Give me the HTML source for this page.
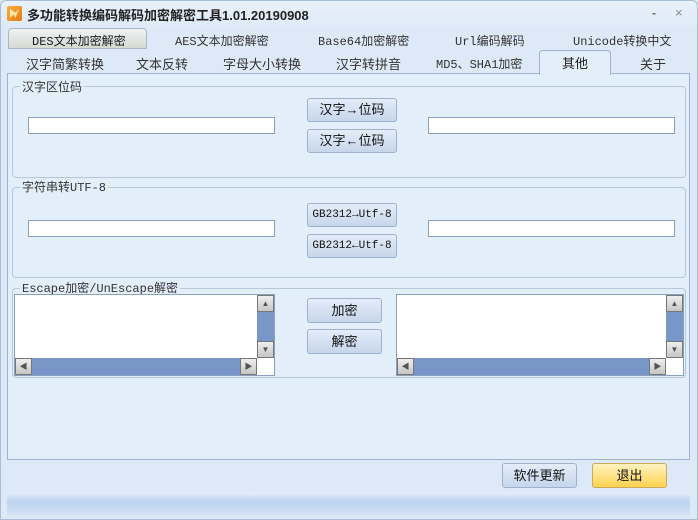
<!DOCTYPE html>
<html><head><meta charset="utf-8"><style>
*{box-sizing:border-box;margin:0;padding:0}
body{width:698px;height:520px;overflow:hidden;background:#dde9f7;font-family:"Liberation Sans","Noto Sans CJK SC",sans-serif;font-size:12px;color:#1a1a1a;position:relative}
.a{position:absolute}
.win{left:0;top:0;width:698px;height:520px;border:1px solid #a9bdd6;border-radius:6px 6px 0 0;background:linear-gradient(#e9f1fb,#dde9f7 30px)}
.t{font-size:12px;white-space:nowrap}
.panel{left:7px;top:73px;width:683px;height:387px;border:1px solid #9fb3cc;background:#e3eefb}
.grp{border:1px solid #b7c8dc;border-radius:4px;background:#e3eefb}
.gl{background:#e3eefb;padding:0 2px;color:#333;font-size:12px}
.in{background:#fff;border:1px solid #8aa1bd}
.btn{border:1px solid #9eb2cc;border-radius:3px;background:linear-gradient(#e4edf8,#c6d6ec);text-align:center;font-size:13px;color:#111}
.mono{font-family:"Liberation Mono","Noto Sans CJK SC",monospace;font-size:11px}
.sb{background:#7897c8}
.sbtn{background:linear-gradient(#eee,#c6c6c6);border:1px solid #777;width:17px;height:17px;font-size:8px;color:#555;text-align:center;line-height:15px}
</style></head><body>
<div class="a win"></div>
<div class="a" style="left:7px;top:6px;width:15px;height:15px;background:linear-gradient(135deg,#f7b23a,#e77814);border-radius:2px"><div class="a" style="left:3px;top:3px;width:9px;height:9px;background:#ffe9a8;clip-path:polygon(0 0,60% 40%,100% 0,60% 100%,40% 60%,0 100%)"></div></div>
<div class="a t" style="left:27px;top:5px;font-weight:bold;font-size:13px;color:#222">多功能转换编码解码加密解密工具1.01.20190908</div>
<div class="a t" style="left:652px;top:6px;color:#666;font-weight:bold">-</div>
<div class="a t" style="left:675px;top:5px;color:#888;font-size:13px">×</div>
<!-- tab row 1 -->
<div class="a" style="left:8px;top:28px;width:139px;height:21px;border:1px solid #a9b8c8;border-radius:4px 4px 0 0;background:linear-gradient(#eef2f6,#d5dbd0)"></div>
<div class="a t mono" style="left:32px;top:32px;font-size:12px">DES文本加密解密</div>
<div class="a t mono" style="left:175px;top:32px;font-size:12px;color:#333">AES文本加密解密</div>
<div class="a t mono" style="left:318px;top:32px;font-size:12px;color:#333">Base64加密解密</div>
<div class="a t mono" style="left:455px;top:32px;font-size:12px;color:#333">Url编码解码</div>
<div class="a t mono" style="left:573px;top:32px;font-size:12px;color:#333">Unicode转换中文</div>
<!-- tab row 2 -->
<div class="a" style="left:539px;top:50px;width:72px;height:25px;border:1px solid #9fb3cc;border-bottom:none;border-radius:4px 4px 0 0;background:#e3eefb;z-index:2"></div>
<div class="a t" style="left:26px;top:54px;font-size:13px;color:#333">汉字简繁转换</div>
<div class="a t" style="left:136px;top:54px;font-size:13px;color:#333">文本反转</div>
<div class="a t" style="left:223px;top:54px;font-size:13px;color:#333">字母大小转换</div>
<div class="a t" style="left:336px;top:54px;font-size:13px;color:#333">汉字转拼音</div>
<div class="a t mono" style="left:436px;top:55px;font-size:12px;color:#333">MD5、SHA1加密</div>
<div class="a t" style="left:562px;top:53px;font-size:13px;z-index:3">其他</div>
<div class="a t" style="left:640px;top:54px;font-size:13px;color:#333">关于</div>
<div class="a panel"></div>
<!-- group 1 -->
<div class="a grp" style="left:12px;top:86px;width:674px;height:92px"></div>
<div class="a t gl" style="left:20px;top:78px;font-size:12px">汉字区位码</div>
<div class="a in" style="left:28px;top:117px;width:247px;height:17px"></div>
<div class="a in" style="left:428px;top:117px;width:247px;height:17px"></div>
<div class="a btn" style="left:307px;top:98px;width:90px;height:24px;line-height:22px">汉字→位码</div>
<div class="a btn" style="left:307px;top:129px;width:90px;height:24px;line-height:22px">汉字←位码</div>
<!-- group 2 -->
<div class="a grp" style="left:12px;top:187px;width:674px;height:91px"></div>
<div class="a t gl mono" style="left:20px;top:178px;font-size:12px">字符串转UTF-8</div>
<div class="a in" style="left:28px;top:220px;width:247px;height:17px"></div>
<div class="a in" style="left:428px;top:220px;width:247px;height:17px"></div>
<div class="a btn mono" style="left:307px;top:203px;width:90px;height:24px;line-height:22px">GB2312→Utf-8</div>
<div class="a btn mono" style="left:307px;top:234px;width:90px;height:24px;line-height:22px">GB2312←Utf-8</div>
<!-- group 3 -->
<div class="a grp" style="left:12px;top:288px;width:674px;height:90px"></div>
<div class="a t gl mono" style="left:20px;top:279px;font-size:12px">Escape加密/UnEscape解密</div>
<div class="a in" style="left:14px;top:294px;width:261px;height:82px"></div>
<div class="a sb" style="left:257px;top:295px;width:17px;height:63px"></div>
<div class="a sbtn" style="left:257px;top:295px">▲</div>
<div class="a sbtn" style="left:257px;top:341px">▼</div>
<div class="a sb" style="left:15px;top:358px;width:242px;height:17px"></div>
<div class="a sbtn" style="left:15px;top:358px">◀</div>
<div class="a sbtn" style="left:240px;top:358px">▶</div>
<div class="a in" style="left:396px;top:294px;width:288px;height:82px"></div>
<div class="a sb" style="left:666px;top:295px;width:17px;height:63px"></div>
<div class="a sbtn" style="left:666px;top:295px">▲</div>
<div class="a sbtn" style="left:666px;top:341px">▼</div>
<div class="a sb" style="left:397px;top:358px;width:269px;height:17px"></div>
<div class="a sbtn" style="left:397px;top:358px">◀</div>
<div class="a sbtn" style="left:649px;top:358px">▶</div>
<div class="a btn" style="left:307px;top:298px;width:75px;height:25px;line-height:23px">加密</div>
<div class="a btn" style="left:307px;top:329px;width:75px;height:25px;line-height:23px">解密</div>
<!-- bottom -->
<div class="a btn" style="left:502px;top:463px;width:75px;height:25px;line-height:23px">软件更新</div>
<div class="a btn" style="left:592px;top:463px;width:75px;height:25px;line-height:23px;border-color:#c9a85a;background:linear-gradient(#fff3c2,#fcd24f)">退出</div>
<div class="a" style="left:7px;top:492px;width:683px;height:24px;background:linear-gradient(#e6effb,#bcd3ef 40%,#d6e4f6)"></div>
</body></html>
